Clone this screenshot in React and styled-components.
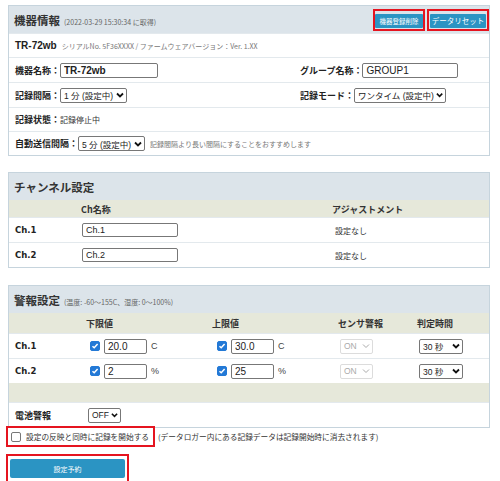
import React from 'react';
import styled, { createGlobalStyle } from 'styled-components';

const GlobalStyle = createGlobalStyle`
  html, body {
    margin: 0;
    padding: 0;
    background: #fff;
  }
  body {
    font-family: "DejaVu Sans", "Noto Sans CJK JP", sans-serif;
    color: #222;
  }
`;

const Page = styled.div`
  width: 500px;
  box-sizing: border-box;
  padding: 5px 10px 0 8px;
`;

const Panel = styled.section`
  border: 1px solid #c6d4dd;
  background: #fff;
  margin-bottom: ${p => p.gap || 0}px;
`;

const PanelHeader = styled.div`
  height: 27px;
  background: #dce4ea;
  display: flex;
  align-items: center;
  justify-content: space-between;
  padding: 0 0 0 5px;
`;

const Title = styled.h2`
  margin: 0;
  font-family: "Noto Sans CJK JP", sans-serif;
  font-size: 11.5px;
  font-weight: 700;
  color: #333;
  display: flex;
  align-items: baseline;
`;

const TitleNote = styled.span`
  font-size: 7px;
  font-weight: 400;
  color: #666;
  margin-left: 4px;
`;

const HeaderActions = styled.div`
  display: flex;
  gap: 2px;
`;

const RedFrame = styled.div`
  display: inline-flex;
  align-items: center;
  border: 2px solid #e5141f;
  padding: ${p => p.pad || '2px 1px'};
`;

const SmallButton = styled.button`
  height: 14px;
  width: ${p => p.w}px;
  border: none;
  border-radius: 1px;
  background: #2b94c3;
  color: #fff;
  font-family: "Noto Sans CJK JP", sans-serif;
  font-size: ${p => p.fs || 6.5}px;
  padding: 0;
  line-height: 14px;
  cursor: pointer;
`;

const Row = styled.div`
  box-sizing: border-box;
  display: grid;
  grid-template-columns: ${p => p.cols || '1fr'};
  height: ${p => p.h || 25}px;
  align-items: center;
  border-top: 1px solid ${p => (p.tint ? '#e6e8da' : '#e3e9ed')};
  background: ${p => (p.tint ? '#e6e8da' : '#fff')};
`;

const Cell = styled.div`
  display: flex;
  align-items: center;
  gap: ${p => p.gap || 0}px;
  padding-left: ${p => p.pl || 0}px;
  height: 100%;
  min-width: 0;
  white-space: nowrap;
`;

const Label = styled.span`
  font-family: "Noto Sans CJK JP", sans-serif;
  font-size: 9px;
  font-weight: 700;
  color: #222;
`;

const Model = styled.span`
  font-family: "Liberation Sans", Arial, sans-serif;
  font-size: 10px;
  font-weight: 700;
  color: #222;
`;

const Note = styled.span`
  font-family: "Noto Sans CJK JP", sans-serif;
  font-size: 7px;
  color: #777;
  margin-left: ${p => p.ml || 0}px;
`;

const Value = styled.span`
  font-family: "Noto Sans CJK JP", sans-serif;
  font-size: 8px;
  color: #333;
`;

const ChLabel = styled.span`
  font-size: 8.5px;
  font-weight: 700;
  color: #222;
`;

const ColHead = styled.span`
  font-family: "Noto Sans CJK JP", sans-serif;
  font-size: 9px;
  font-weight: 700;
  color: #333;
`;

const TextInput = styled.input`
  box-sizing: border-box;
  width: ${p => p.w}px;
  height: ${p => p.h || 15}px;
  border: 1px solid #777;
  border-radius: 2px;
  padding: 0 3px;
  margin: 0;
  font-family: "Liberation Sans", Arial, sans-serif;
  font-size: ${p => p.fs || 10}px;
  font-weight: ${p => (p.bold ? 700 : 400)};
  color: #222;
  background: #fff;
`;

const SelectBox = styled.span`
  box-sizing: border-box;
  display: inline-flex;
  align-items: center;
  justify-content: space-between;
  gap: 2px;
  width: ${p => p.w}px;
  height: 15px;
  border: 1px solid ${p => (p.disabled ? '#dcdcdc' : '#777')};
  border-radius: 2px;
  padding: 0 2px 0 3px;
  font-family: "Liberation Sans", "Noto Sans CJK JP", sans-serif;
  font-size: 8.5px;
  color: ${p => (p.disabled ? '#aaa' : '#222')};
  background: #fff;
`;

const Unit = styled.span`
  font-family: "Liberation Sans", Arial, sans-serif;
  font-size: 9px;
  color: #444;
`;

const Box = styled.span`
  box-sizing: border-box;
  display: inline-flex;
  align-items: center;
  justify-content: center;
  width: 10px;
  height: 10px;
  border-radius: 2px;
  background: ${p => (p.checked ? '#2379d6' : '#fff')};
  border: 1px solid ${p => (p.checked ? '#2379d6' : '#777')};
  flex: none;
`;

const Below = styled.div`
  display: flex;
  align-items: center;
  margin: -2px 0 0 -2px;
`;

const CheckText = styled.span`
  font-family: "Noto Sans CJK JP", sans-serif;
  font-size: 7.7px;
  color: #333;
  margin-left: ${p => p.ml || 0}px;
`;

const SubmitRow = styled.div`
  margin: 7px 0 0 -2px;
`;

const SubmitButton = styled.button`
  width: 115px;
  height: 19px;
  border: none;
  border-radius: 2px;
  background: #2b94c3;
  color: #fff;
  font-family: "Noto Sans CJK JP", sans-serif;
  font-size: 7px;
  padding: 0;
  cursor: pointer;
`;

const Chevron = ({ light }) => (
  <svg width="8" height="6" viewBox="0 0 8 6">
    <path d="M1 1.5 L4 4.5 L7 1.5" fill="none" stroke={light ? '#aaa' : '#111'} strokeWidth={light ? 1 : 1.8} />
  </svg>
);

const Select = ({ w, children, disabled }) => (
  <SelectBox w={w} disabled={disabled}>
    <span>{children}</span>
    <Chevron light={disabled} />
  </SelectBox>
);

const Check = ({ checked }) => (
  <Box checked={checked}>
    {checked && (
      <svg width="8" height="8" viewBox="0 0 8 8">
        <path d="M1.5 4.2 L3.2 5.8 L6.6 2" fill="none" stroke="#fff" strokeWidth="1.5" />
      </svg>
    )}
  </Box>
);

const devCols = '291px 1fr';
const chCols = '72px 251px 1fr';
const alCols = '77px 126px 126px 79px 1fr';

const alarms = [
  { ch: 'Ch.1', lo: '20.0', hi: '30.0', unit: 'C' },
  { ch: 'Ch.2', lo: '2', hi: '25', unit: '%' },
];

export default function App() {
  return (
    <Page>
      <GlobalStyle />

      <Panel gap={16}>
        <PanelHeader>
          <Title>
            機器情報<TitleNote>(2022-03-29 15:30:34 に取得)</TitleNote>
          </Title>
          <HeaderActions>
            <RedFrame pad="3px 0 1px">
              <SmallButton w={48}>機器登録削除</SmallButton>
            </RedFrame>
            <RedFrame pad="3px 1px 1px">
              <SmallButton w={56} fs={7.5}>データリセット</SmallButton>
            </RedFrame>
          </HeaderActions>
        </PanelHeader>
        <Row h={24}>
          <Cell pl={6}>
            <Model>TR-72wb</Model>
            <Note ml={5}>シリアルNo. 5F36XXXX / ファームウェアバージョン：Ver. 1.XX</Note>
          </Cell>
        </Row>
        <Row cols={devCols}>
          <Cell pl={6}>
            <Label>機器名称：</Label>
            <TextInput w={98} bold defaultValue="TR-72wb" />
          </Cell>
          <Cell>
            <Label>グループ名称：</Label>
            <TextInput w={96} defaultValue="GROUP1" />
          </Cell>
        </Row>
        <Row cols={devCols}>
          <Cell pl={6}>
            <Label>記録間隔：</Label>
            <Select w={67}>1 分 (設定中)</Select>
          </Cell>
          <Cell>
            <Label>記録モード：</Label>
            <Select w={92}>ワンタイム (設定中)</Select>
          </Cell>
        </Row>
        <Row cols={devCols} h={24}>
          <Cell pl={6}>
            <Label>記録状態：</Label>
            <Value>記録停止中</Value>
          </Cell>
          <Cell />
        </Row>
        <Row h={24}>
          <Cell pl={6}>
            <Label>自動送信間隔：</Label>
            <Select w={67}>5 分 (設定中)</Select>
            <Note ml={5}>記録間隔より長い間隔にすることをおすすめします</Note>
          </Cell>
        </Row>
      </Panel>

      <Panel gap={17}>
        <PanelHeader>
          <Title>チャンネル設定</Title>
        </PanelHeader>
        <Row cols={chCols} h={17} tint>
          <Cell />
          <Cell><ColHead>Ch名称</ColHead></Cell>
          <Cell><ColHead>アジャストメント</ColHead></Cell>
        </Row>
        {['Ch.1', 'Ch.2'].map(ch => (
          <Row key={ch} cols={chCols}>
            <Cell pl={6}><ChLabel>{ch}</ChLabel></Cell>
            <Cell pl={1}><TextInput w={96} h={14} fs={9} defaultValue={ch} /></Cell>
            <Cell pl={3}><Value>設定なし</Value></Cell>
          </Row>
        ))}
      </Panel>

      <Panel>
        <PanelHeader>
          <Title>
            警報設定<TitleNote>(温度: -60～155C、湿度: 0～100%)</TitleNote>
          </Title>
        </PanelHeader>
        <Row cols={alCols} h={20} tint>
          <Cell />
          <Cell><ColHead>下限値</ColHead></Cell>
          <Cell><ColHead>上限値</ColHead></Cell>
          <Cell><ColHead>センサ警報</ColHead></Cell>
          <Cell><ColHead>判定時間</ColHead></Cell>
        </Row>
        {alarms.map(a => (
          <Row key={a.ch} cols={alCols}>
            <Cell pl={6}><ChLabel>{a.ch}</ChLabel></Cell>
            <Cell pl={4} gap={4}>
              <Check checked />
              <TextInput w={43} defaultValue={a.lo} />
              <Unit>{a.unit}</Unit>
            </Cell>
            <Cell pl={5} gap={4}>
              <Check checked />
              <TextInput w={43} defaultValue={a.hi} />
              <Unit>{a.unit}</Unit>
            </Cell>
            <Cell pl={2}><Select w={33} disabled>ON</Select></Cell>
            <Cell pl={2}><Select w={44}>30 秒</Select></Cell>
          </Row>
        ))}
        <Row h={19} tint />
        <Row cols={alCols}>
          <Cell pl={6}><Label>電池警報</Label></Cell>
          <Cell pl={2}><Select w={33}>OFF</Select></Cell>
        </Row>
      </Panel>

      <Below>
        <RedFrame pad="3px 4px 3px 3px">
          <Check />
          <CheckText ml={5}>設定の反映と同時に記録を開始する</CheckText>
        </RedFrame>
        <CheckText ml={3}>(データロガー内にある記録データは記録開始時に消去されます)</CheckText>
      </Below>

      <SubmitRow>
        <RedFrame pad="3px 2px">
          <SubmitButton>設定予約</SubmitButton>
        </RedFrame>
      </SubmitRow>
    </Page>
  );
}
